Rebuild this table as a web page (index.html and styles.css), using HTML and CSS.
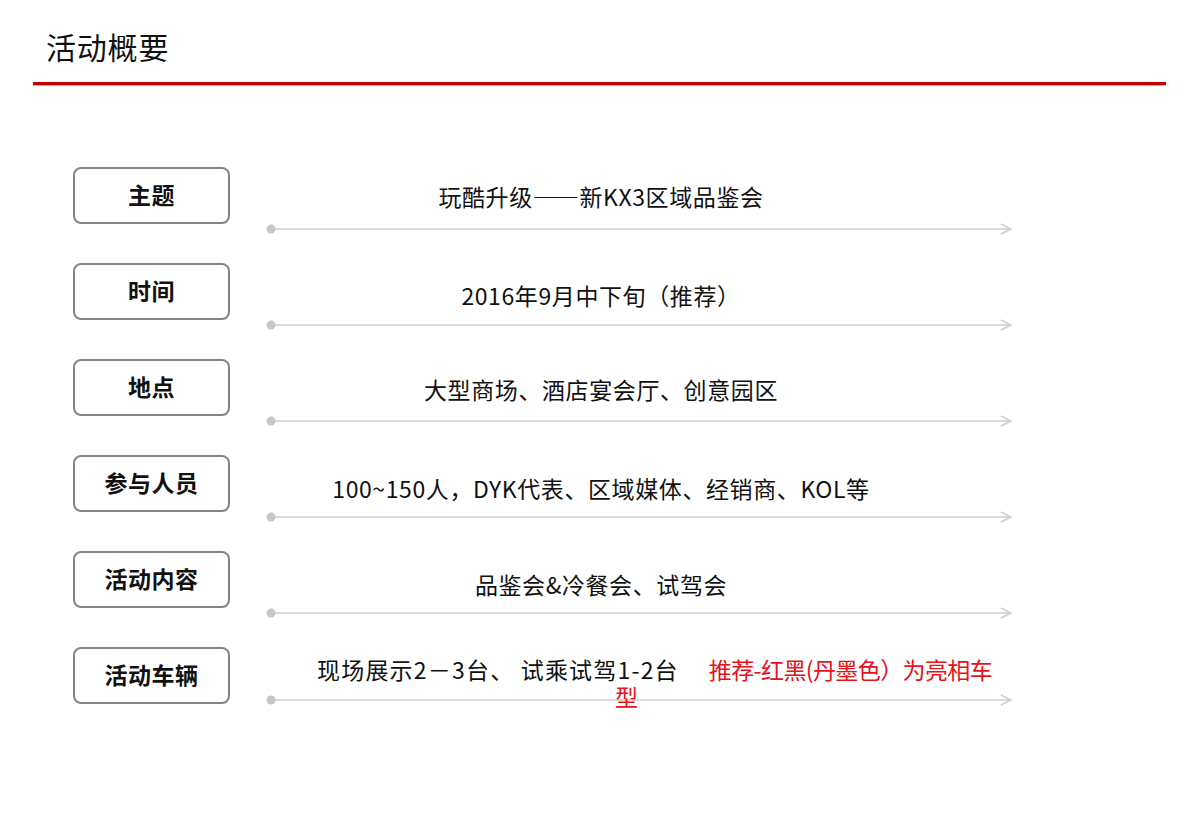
FILE: index.html
```html
<!DOCTYPE html>
<html lang="zh-CN">
<head>
<meta charset="utf-8">
<title>活动概要</title>
<link rel="stylesheet" href="styles.css">
</head>
<body>
<header class="header">
  <h1 class="title">活动概要</h1>
  <div class="rule"></div>
</header>
<main class="rows">
  <section class="row r1">
    <div class="label">主题</div>
    <div class="content">
      <p class="text">玩酷升级——新KX3区域品鉴会</p>
      <svg class="arrow" width="750" height="14" viewBox="0 0 750 14"><line x1="6" y1="7" x2="745" y2="7" stroke="#dadada" stroke-width="2"/><circle cx="6" cy="7" r="4.5" fill="#c6c6c6"/><polyline points="736,2 746,7 736,12" fill="none" stroke="#cfcfcf" stroke-width="1.5"/></svg>
    </div>
  </section>
  <section class="row r2">
    <div class="label">时间</div>
    <div class="content">
      <p class="text">2016年9月中下旬（推荐）</p>
      <svg class="arrow" width="750" height="14" viewBox="0 0 750 14"><line x1="6" y1="7" x2="745" y2="7" stroke="#dadada" stroke-width="2"/><circle cx="6" cy="7" r="4.5" fill="#c6c6c6"/><polyline points="736,2 746,7 736,12" fill="none" stroke="#cfcfcf" stroke-width="1.5"/></svg>
    </div>
  </section>
  <section class="row r3">
    <div class="label">地点</div>
    <div class="content">
      <p class="text">大型商场、酒店宴会厅、创意园区</p>
      <svg class="arrow" width="750" height="14" viewBox="0 0 750 14"><line x1="6" y1="7" x2="745" y2="7" stroke="#dadada" stroke-width="2"/><circle cx="6" cy="7" r="4.5" fill="#c6c6c6"/><polyline points="736,2 746,7 736,12" fill="none" stroke="#cfcfcf" stroke-width="1.5"/></svg>
    </div>
  </section>
  <section class="row r4">
    <div class="label">参与人员</div>
    <div class="content">
      <p class="text">100~150人，DYK代表、区域媒体、经销商、KOL等</p>
      <svg class="arrow" width="750" height="14" viewBox="0 0 750 14"><line x1="6" y1="7" x2="745" y2="7" stroke="#dadada" stroke-width="2"/><circle cx="6" cy="7" r="4.5" fill="#c6c6c6"/><polyline points="736,2 746,7 736,12" fill="none" stroke="#cfcfcf" stroke-width="1.5"/></svg>
    </div>
  </section>
  <section class="row r5">
    <div class="label">活动内容</div>
    <div class="content">
      <p class="text">品鉴会&amp;冷餐会、试驾会</p>
      <svg class="arrow" width="750" height="14" viewBox="0 0 750 14"><line x1="6" y1="7" x2="745" y2="7" stroke="#dadada" stroke-width="2"/><circle cx="6" cy="7" r="4.5" fill="#c6c6c6"/><polyline points="736,2 746,7 736,12" fill="none" stroke="#cfcfcf" stroke-width="1.5"/></svg>
    </div>
  </section>
  <section class="row r6">
    <div class="label">活动车辆</div>
    <div class="content">
      <svg class="arrow" width="750" height="14" viewBox="0 0 750 14"><line x1="6" y1="7" x2="745" y2="7" stroke="#dadada" stroke-width="2"/><circle cx="6" cy="7" r="4.5" fill="#c6c6c6"/><polyline points="736,2 746,7 736,12" fill="none" stroke="#cfcfcf" stroke-width="1.5"/></svg>
      <div class="text text-left">
        <div class="line1"><span class="black-part">现场展示2－3台、 试乘试驾1-2台</span><span class="red red-gap">推荐-红黑(丹墨色）为亮相车</span></div>
        <div class="line2 red">型</div>
      </div>
    </div>
  </section>
</main>
</body>
</html>
```
FILE: styles.css
```css
* { box-sizing: border-box; }
html, body { margin: 0; padding: 0; background: #fff; }
body {
  width: 1200px;
  height: 831px;
  overflow: hidden;
  font-family: "Noto Sans CJK SC", "Noto Sans", sans-serif;
  color: #111;
}
.header { padding-top: 28px; }
.title {
  margin: 0 0 0 46px;
  font-size: 30px;
  line-height: 36px;
  font-weight: 400;
  letter-spacing: 0.8px;
  color: #111;
}
.rule {
  margin: 18px 0 0 33px;
  width: 1133px;
  height: 4px;
  background: #c00000;
  border-bottom: 1px solid #f29a9a;
}
.rows {
  margin-top: 81px;
  padding-left: 73px;
  display: flex;
  flex-direction: column;
}
.row {
  display: flex;
  height: 96px;
  align-items: flex-start;
}
.label {
  width: 157px;
  height: 57px;
  padding-bottom: 4px;
  border: 2px solid #858585;
  border-radius: 8px;
  display: flex;
  align-items: center;
  justify-content: center;
  font-size: 23px;
  font-weight: 700;
  color: #111;
  letter-spacing: 0.5px;
}
.content {
  margin-left: 35px;
  display: grid;
  width: 750px;
}
.content > * { grid-area: 1 / 1; }
.text {
  margin: 14px 0 0 4px;
  width: 664px;
  font-size: 23px;
  line-height: 30px;
  text-align: center;
  letter-spacing: 0.6px;
  color: #111;
}
.arrow { margin-top: 55px; display: block; }
.r2 .text { margin-top: 17px; }
.r3 .text { margin-top: 15px; }
.r4 .text { margin-top: 18px; }
.r5 .text { margin-top: 18px; }
.r6 .arrow { margin-top: 46px; }
.r6 .text { margin-top: 9px; }
.text-left { text-align: left; width: 740px; padding-left: 48px; }
.line1 { line-height: 26px; white-space: nowrap; }
.black-part { letter-spacing: 1.2px; }
.line2 { line-height: 28px; padding-left: 298px; }
.red { color: #e8101a; }
.red-gap { margin-left: 30px; letter-spacing: -0.6px; }
```
